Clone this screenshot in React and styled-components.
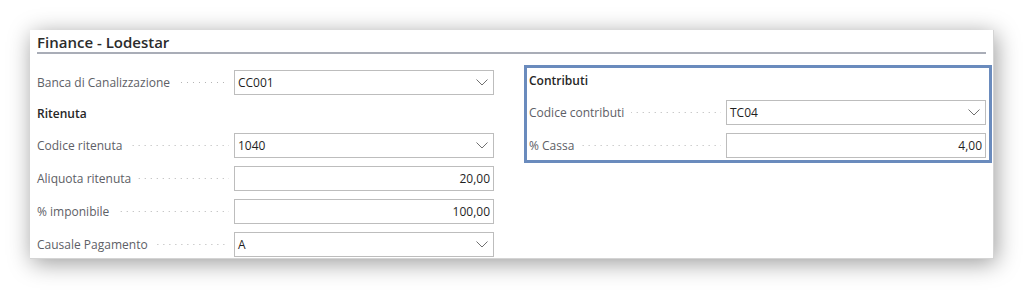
import React from "react"
import styled, {createGlobalStyle} from "styled-components"

/* global page styles */
const GlobalStyle = createGlobalStyle`
  html, body {
    margin: 0;
    padding: 0;
    background: #fff;
  }
  body {
    font-family: "Open Sans", "Noto Sans", sans-serif;
  }
`

const Page = styled.div`
  width: 1024px;
  height: 290px;
  padding: 30px 30px 0 30px;
  box-sizing: border-box;
`

const Panel = styled.div`
  width: 964px;
  height: 229px;
  box-sizing: border-box;
  padding: 2px 7px 0 7px;
  background: #fff;
  border-right: 1px solid #d4d4d4;
  border-bottom: 1px solid #d4d4d4;
  box-shadow: 2px 4px 22px rgba(0, 0, 0, 0.4);
`

const Header = styled.div`
  height: 20px;
  border-bottom: 2px solid #a9adb7;
  font-size: 15px;
  font-weight: 600;
  line-height: 20px;
  color: #2b2b2b;
`

const Content = styled.div`
  display: grid;
  grid-template-columns: 457px 458px;
  column-gap: 35px;
  align-items: start;
  margin-top: 16px;
`

const Column = styled.div`
  display: flex;
  flex-direction: column;
  gap: 8px;
`

const Group = styled(Column)`
  outline: ${p => (p.focused ? "3px solid #6a8bbd" : "none")};
  outline-offset: 2px;
`

const SectionTitle = styled.div`
  height: 22px;
  line-height: 22px;
  font-size: 12px;
  font-weight: 600;
  color: #262626;
`

const Row = styled.div`
  display: grid;
  grid-template-columns: 197px 260px;
  height: 25px;
  align-items: center;
`

const Caption = styled.div`
  display: flex;
  align-items: center;
  height: 100%;
  font-size: 12px;
  color: #5d6066;
  white-space: nowrap;
`

const Leader = styled.span`
  flex: 1;
  height: 1px;
  margin: 0 5px 0 7px;
  background-image: linear-gradient(to right, #b4b4b4 1px, transparent 1px);
  background-size: 6px 1px;
  background-repeat: repeat-x;
  background-position: right center;
`

const Field = styled.div`
  display: flex;
  align-items: center;
  justify-content: ${p => (p.numeric ? "flex-end" : "space-between")};
  height: 25px;
  box-sizing: border-box;
  border: 1px solid #bdbdbd;
  padding: 0 3px 0 3px;
  font-size: 12px;
  color: #1f1f1f;
`

const Chevron = styled.svg`
  width: 12px;
  height: 7px;
  margin-right: 2px;
  flex-shrink: 0;
`

const ChevronDown = () => (
  <Chevron viewBox="0 0 12 7">
    <polyline points="0.5,0.5 6,6 11.5,0.5" fill="none" stroke="#707070" strokeWidth="1" />
  </Chevron>
)

const FormRow = ({label, value, numeric}) => (
  <Row>
    <Caption>
      {label}
      <Leader />
    </Caption>
    <Field numeric={numeric}>
      <span>{value}</span>
      {!numeric && <ChevronDown />}
    </Field>
  </Row>
)

const App = () => {
  return (
    <Page>
      <GlobalStyle />
      <Panel>
        <Header>Finance - Lodestar</Header>
        <Content>
          <Column>
            <FormRow label="Banca di Canalizzazione" value="CC001" />
            <SectionTitle>Ritenuta</SectionTitle>
            <FormRow label="Codice ritenuta" value="1040" />
            <FormRow label="Aliquota ritenuta" value="20,00" numeric />
            <FormRow label="% imponibile" value="100,00" numeric />
            <FormRow label="Causale Pagamento" value="A" />
          </Column>
          <Group focused>
            <SectionTitle>Contributi</SectionTitle>
            <FormRow label="Codice contributi" value="TC04" />
            <FormRow label="% Cassa" value="4,00" numeric />
          </Group>
        </Content>
      </Panel>
    </Page>
  )
}

export default App
